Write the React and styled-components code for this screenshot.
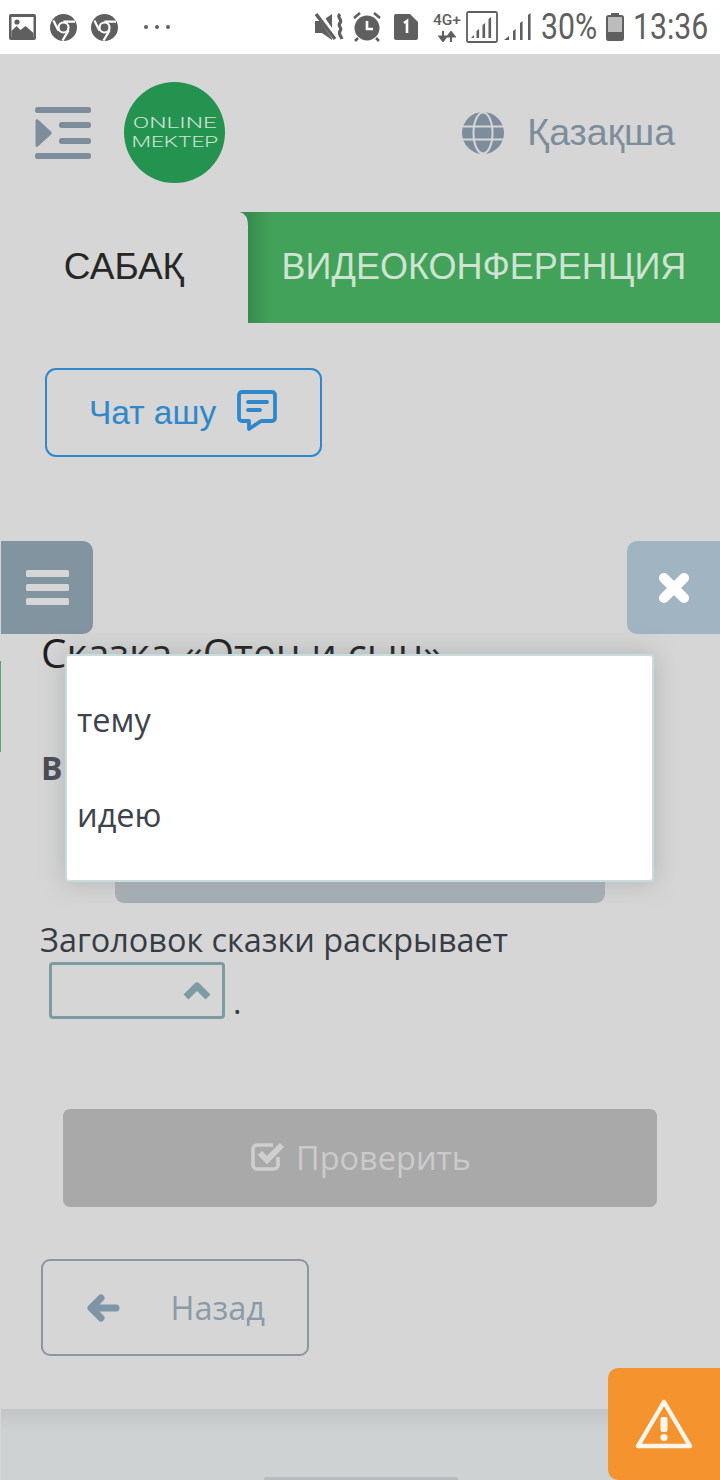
import styled, { createGlobalStyle } from "styled-components";

const GlobalStyle = createGlobalStyle`
  html, body {
    margin: 0;
    padding: 0;
    background: #d6d6d6;
  }
  * {
    box-sizing: border-box;
  }
`;

const STATUS_GREY = "#5f5f5f";

const ImageIcon = () => (
  <svg width="27" height="26" viewBox="0 0 27 26">
    <rect x="0" y="0" width="27" height="26" rx="2" fill={STATUS_GREY} />
    <rect x="2.5" y="3" width="22" height="20" fill="#fff" />
    <circle cx="8" cy="8" r="2.6" fill={STATUS_GREY} />
    <path d="M2.5 23V17l5-5 4 4 5-4 8 7v4z" fill={STATUS_GREY} />
  </svg>
);

const ChromeIcon = () => (
  <svg width="27" height="27" viewBox="0 0 27 27">
    <circle cx="13.5" cy="13.5" r="13.5" fill={STATUS_GREY} />
    <circle cx="13.5" cy="13.5" r="5" fill={STATUS_GREY} stroke="#fff" strokeWidth="2.2" />
    <path d="M13.5 7.6H25M8.4 16.4L3.4 6.5M18.6 16.4L12.5 26.5" stroke="#fff" strokeWidth="2.2" fill="none" />
  </svg>
);

const DotsIcon = () => (
  <svg width="28" height="6" viewBox="0 0 28 6" fill={STATUS_GREY}>
    <circle cx="3" cy="3" r="2" />
    <circle cx="14" cy="3" r="2" />
    <circle cx="25" cy="3" r="2" />
  </svg>
);

const MuteIcon = () => (
  <svg width="30" height="28" viewBox="0 0 30 28">
    <path d="M0 8h7l10-7v26L7 20H0z" fill={STATUS_GREY} />
    <path d="M3 0l18 26" stroke="#fff" strokeWidth="6" />
    <path d="M1 1l19 25" stroke={STATUS_GREY} strokeWidth="3.4" />
    <path d="M25 1c-4 4 3 5 0 9-3 3 3 5 0 8-2 3 1 5 2 8" stroke={STATUS_GREY} strokeWidth="3.2" fill="none" />
  </svg>
);

const AlarmIcon = () => (
  <svg width="28" height="30" viewBox="0 0 28 30">
    <circle cx="14" cy="16" r="12.5" fill={STATUS_GREY} />
    <path d="M14 9v8h6" stroke="#fff" strokeWidth="2.6" fill="none" />
    <path d="M1 6l6-5M27 6l-6-5M5 26l-3 3M23 26l3 3" stroke={STATUS_GREY} strokeWidth="2.6" />
  </svg>
);

const SimIcon = () => (
  <svg width="24" height="26" viewBox="0 0 24 26">
    <path d="M2 0h14l8 8v16a2 2 0 0 1-2 2H2a2 2 0 0 1-2-2V2a2 2 0 0 1 2-2z" fill={STATUS_GREY} />
    <path d="M10 9l3-2v12" stroke="#fff" strokeWidth="2.6" fill="none" />
  </svg>
);

const TransferIcon = () => (
  <svg width="18" height="11" viewBox="0 0 18 11">
    <path d="M5 0v7M1.5 5.5L5 10l3.5-4.5zM13 11V4M9.5 5.5L13 1l3.5 4.5z" stroke={STATUS_GREY} strokeWidth="2" fill={STATUS_GREY} />
  </svg>
);

const SignalBoxIcon = () => (
  <svg width="32" height="32" viewBox="0 0 32 32">
    <rect x="1" y="1" width="30" height="30" rx="1.5" fill="none" stroke={STATUS_GREY} strokeWidth="1.8" />
    <path d="M5 27l3-3v3zM10.5 27v-7l2.6-2v9zM16.5 27V14l2.6-2v15zM22.5 27V8l2.6-2v21z" fill={STATUS_GREY} />
  </svg>
);

const SignalIcon = () => (
  <svg width="28" height="28" viewBox="0 0 28 28">
    <path d="M0 27l5-4v4zM9 27v-9l2.6-2v11zM16 27V10l2.6-2v19zM24 27V2l2.6-2v27z" fill={STATUS_GREY} />
  </svg>
);

const BatteryIcon = () => (
  <svg width="18" height="28" viewBox="0 0 18 28">
    <rect x="5" y="0" width="8" height="3" fill={STATUS_GREY} />
    <rect x="1" y="3" width="16" height="24" rx="1.5" fill="#bcbcbc" stroke={STATUS_GREY} strokeWidth="2" />
    <rect x="1" y="19" width="16" height="8" fill={STATUS_GREY} />
  </svg>
);

const MenuIndentIcon = () => (
  <svg width="56" height="52" viewBox="0 0 56 52">
    <g fill="#7d8d9c">
      <rect x="0" y="0" width="56" height="6" rx="2.5" />
      <rect x="24" y="15" width="32" height="6" rx="2.5" />
      <rect x="24" y="31" width="32" height="6" rx="2.5" />
      <rect x="0" y="46" width="56" height="6" rx="2.5" />
      <path d="M0.5 13.5a1.5 1.5 0 0 1 2.4-1L16 24.6a1.8 1.8 0 0 1 0 2.8L2.9 39.5a1.5 1.5 0 0 1-2.4-1z" />
    </g>
  </svg>
);

const GlobeIcon = () => (
  <svg width="42" height="42" viewBox="0 0 42 42">
    <circle cx="21" cy="21" r="21" fill="#7d8d9c" />
    <ellipse cx="21" cy="21" rx="9.5" ry="20.5" fill="none" stroke="#d6d6d6" strokeWidth="2" />
    <path d="M1 14.5h40M1 27.5h40" stroke="#d6d6d6" strokeWidth="2" />
  </svg>
);

const ChatIcon = () => (
  <svg width="40" height="41" viewBox="0 0 40 41" fill="none" stroke="#2f88cb" strokeWidth="3.8" strokeLinejoin="round" strokeLinecap="round">
    <path d="M5 2h30a3 3 0 0 1 3 3v23a3 3 0 0 1-3 3H24l-12 8v-8H5a3 3 0 0 1-3-3V5a3 3 0 0 1 3-3z" />
    <path d="M11 12h19M11 20h12" />
  </svg>
);

const BurgerIcon = () => (
  <svg width="43" height="35" viewBox="0 0 43 35" fill="#d6d6d6">
    <rect x="0" y="0" width="43" height="7" rx="1.5" />
    <rect x="0" y="14" width="43" height="7" rx="1.5" />
    <rect x="0" y="28" width="43" height="7" rx="1.5" />
  </svg>
);

const CrossIcon = () => (
  <svg width="34" height="34" viewBox="0 0 34 34">
    <path d="M7 7l20 20M27 7L7 27" stroke="#fff" strokeWidth="10" strokeLinecap="round" />
  </svg>
);

const ChevronUpIcon = () => (
  <svg width="30" height="20" viewBox="0 0 30 20">
    <path d="M4 16L15 5l11 11" fill="none" stroke="#7c9ba2" strokeWidth="7" strokeLinejoin="round" />
  </svg>
);

const CheckSquareIcon = () => (
  <svg width="34" height="30" viewBox="0 0 34 30" fill="none">
    <path d="M27 16v8a4 4 0 0 1-4 4H6a4 4 0 0 1-4-4V8a4 4 0 0 1 4-4h16" stroke="#cfcfcf" strokeWidth="3.6" />
    <path d="M9 12l7 7L31 4" stroke="#cfcfcf" strokeWidth="6" />
  </svg>
);

const ArrowLeftIcon = () => (
  <svg width="34" height="28" viewBox="0 0 34 28">
    <path d="M30 14H8M15 4L5 14l10 10" fill="none" stroke="#7d95a6" strokeWidth="7" strokeLinecap="round" strokeLinejoin="round" />
  </svg>
);

const WarningIcon = () => (
  <svg width="58" height="50" viewBox="0 0 58 50">
    <path d="M29 3L3 47h52z" fill="none" stroke="#fdf6ec" strokeWidth="4.4" strokeLinejoin="round" />
    <rect x="25.5" y="18" width="7" height="15" rx="2" fill="#fdf6ec" />
    <circle cx="29" cy="38.5" r="3.6" fill="#fdf6ec" />
  </svg>
);

const Page = styled.div`
  position: relative;
  width: 720px;
  height: 1480px;
  overflow: hidden;
  background: #d6d6d6;
  font-family: "Open Sans", sans-serif;
`;

const StatusBar = styled.div`
  height: 54px;
  background: #fff;
  padding: 0 12px 0 9px;
  display: flex;
  align-items: center;
  justify-content: space-between;
`;

const StatusGroup = styled.div`
  display: flex;
  align-items: center;
`;

const StatusSlot = styled.div`
  display: flex;
  line-height: 0;
  margin-left: ${(p) => p.$ml || 0}px;
`;

const NetLabel = styled.div`
  width: 28px;
  margin-left: 15px;
  display: flex;
  flex-direction: column;
  align-items: center;
  gap: 3px;
  font: 500 15.5px/15px "Roboto", sans-serif;
  color: ${STATUS_GREY};
`;

const StatusText = styled.span`
  font: 400 36px/1 "Roboto", sans-serif;
  color: ${STATUS_GREY};
  display: inline-block;
  width: ${(p) => p.$width}px;
  margin-left: ${(p) => p.$ml}px;
  white-space: nowrap;
  transform: scaleX(0.84);
  transform-origin: left center;
`;

const Header = styled.header`
  height: 158px;
  padding: 28px 45px 0 35px;
  display: flex;
  align-items: flex-start;
`;

const MenuButton = styled.div`
  margin-top: 25px;
  margin-right: 33px;
  line-height: 0;
`;

const Logo = styled.div`
  width: 101px;
  height: 101px;
  border-radius: 50%;
  background: #24934f;
  color: #cfe3d6;
  display: flex;
  flex-direction: column;
  align-items: center;
  justify-content: center;
  font: 300 15.5px/18.4px "Roboto", sans-serif;
`;

const LogoLine = styled.span`
  transform: scaleX(${(p) => p.$stretch});
`;

const LanguagePicker = styled.div`
  margin: 28px 0 0 auto;
  display: flex;
  align-items: center;
  gap: 23px;
  font: 400 37.5px/42px "Liberation Sans", sans-serif;
  color: #7d8d9c;

  svg {
    margin-top: 2px;
  }
`;

const Tabs = styled.div`
  display: flex;
  height: 111px;
`;

const Tab = styled.div`
  width: 248px;
  display: flex;
  align-items: center;
  justify-content: center;
  padding-bottom: 2px;
  font: 400 37px "Liberation Sans", sans-serif;
  color: #262626;
`;

const ActiveTab = styled.div`
  position: relative;
  flex: 1;
  display: flex;
  align-items: center;
  justify-content: center;
  padding-bottom: 2px;
  background: linear-gradient(90deg, #378c50 0, #43a259 24px, #43a259 100%);
  font: 400 36px "Liberation Sans", sans-serif;
  color: #cfe3d2;
  white-space: nowrap;

  &::before {
    content: "";
    position: absolute;
    left: -8px;
    top: 0;
    width: 8px;
    height: 16px;
    clip-path: path("M0 0 H8 V14 Q8 2 0 0 Z");
    background: #378c50;
  }
`;

const Content = styled.main`
  padding: 45px 0 0 45px;
`;

const ChatButton = styled.div`
  width: 277px;
  height: 89px;
  border: 2px solid #2f88cb;
  border-radius: 11px;
  padding-left: 42px;
  display: flex;
  align-items: center;
  gap: 21px;
  font: 400 33.5px "Liberation Sans", sans-serif;
  color: #2f88cb;

  svg {
    margin-top: -4px;
  }
`;

const SideTab = styled.div`
  position: absolute;
  top: 541px;
  height: 93px;
  display: flex;
  align-items: center;
  justify-content: center;
  width: ${(p) => p.$width}px;
  background: ${(p) => p.$bg};
  left: ${(p) => p.$left}px;
  border-radius: ${(p) => p.$radius};
`;

const LessonTitle = styled.h1`
  position: absolute;
  top: 627px;
  left: 41px;
  margin: 0;
  font-size: 40.3px;
  line-height: 52px;
  font-weight: 400;
  color: #1d1d1d;
  white-space: nowrap;
`;

const GreenEdge = styled.div`
  position: absolute;
  left: 0;
  top: 661px;
  width: 1px;
  height: 91px;
  background: #5fa475;
`;

const QuestionLabel = styled.b`
  position: absolute;
  left: 41px;
  top: 747px;
  font-size: 32px;
  line-height: 42px;
  color: #474b55;
`;

const SelectPanelBack = styled.div`
  position: absolute;
  left: 115px;
  top: 870px;
  width: 490px;
  height: 33px;
  border-radius: 0 0 9px 9px;
  background: linear-gradient(180deg, #b5bcc0, #a4adb4);
`;

const Dropdown = styled.div`
  position: absolute;
  left: 65px;
  top: 654px;
  width: 589px;
  height: 228px;
  padding: 16px 10px 0;
  background: #fff;
  border: 2px solid #c9dcdd;
  border-radius: 4px;
  box-shadow: 0 0 26px rgba(120, 125, 128, 0.4);
`;

const Option = styled.div`
  height: 95px;
  display: flex;
  align-items: center;
  font-size: 32.5px;
  color: #3d434c;
`;

const Sentence = styled.div`
  position: absolute;
  left: 40px;
  top: 917px;
  font-size: 32.4px;
  line-height: 44px;
  color: #363c44;
`;

const FillRow = styled.div`
  display: flex;
  align-items: flex-end;
  margin: 1px 0 0 9px;
  gap: 8px;
`;

const SelectBox = styled.div`
  width: 176px;
  height: 57px;
  padding: 0 10px 0 0;
  border: 3px solid #7c9ba2;
  border-radius: 4px;
  display: flex;
  align-items: center;
  justify-content: flex-end;
`;

const Dot = styled.span`
  line-height: 36px;
`;

const CheckButton = styled.div`
  position: absolute;
  left: 63px;
  top: 1109px;
  width: 594px;
  height: 98px;
  border-radius: 7px;
  background: #a9a9a9;
  display: flex;
  align-items: center;
  padding: 0 0 2px 188px;
  gap: 11px;
  font-size: 32.5px;
  color: #cbcbcb;

  svg {
    margin-top: -2px;
  }
`;

const BackButton = styled.div`
  position: absolute;
  left: 41px;
  top: 1259px;
  width: 268px;
  height: 97px;
  border: 2px solid #8d979e;
  border-radius: 9px;
  padding: 0 42px 0 43px;
  display: flex;
  align-items: center;
  justify-content: space-between;
  font-size: 32.5px;
  color: #8a9ba8;
`;

const Footer = styled.footer`
  position: absolute;
  left: 1px;
  right: 0;
  top: 1409px;
  bottom: 0;
  background: linear-gradient(180deg, #c3c6c7 0, #cfd2d3 24px);
`;

const FooterHandle = styled.div`
  position: absolute;
  left: 263px;
  top: 68px;
  width: 194px;
  height: 3px;
  border-radius: 2px 2px 0 0;
  background: #b9bcbe;
`;

const AlertButton = styled.div`
  position: absolute;
  left: 608px;
  top: 1368px;
  width: 112px;
  height: 112px;
  border-radius: 10px 0 0 10px;
  background: #f5942f;
  display: flex;
  align-items: center;
  justify-content: center;
`;

export default function App() {
  return (
    <Page>
      <GlobalStyle />
      <StatusBar>
        <StatusGroup>
          <ImageIcon />
          <StatusSlot $ml={14}>
            <ChromeIcon />
          </StatusSlot>
          <StatusSlot $ml={14}>
            <ChromeIcon />
          </StatusSlot>
          <StatusSlot $ml={25}>
            <DotsIcon />
          </StatusSlot>
        </StatusGroup>
        <StatusGroup>
          <MuteIcon />
          <StatusSlot $ml={8}>
            <AlarmIcon />
          </StatusSlot>
          <StatusSlot $ml={13}>
            <SimIcon />
          </StatusSlot>
          <NetLabel>
            4G+
            <TransferIcon />
          </NetLabel>
          <StatusSlot $ml={5}>
            <SignalBoxIcon />
          </StatusSlot>
          <StatusSlot $ml={6}>
            <SignalIcon />
          </StatusSlot>
          <StatusText $ml={9} $width={55}>30%</StatusText>
          <StatusSlot $ml={10}>
            <BatteryIcon />
          </StatusSlot>
          <StatusText $ml={9} $width={75}>13:36</StatusText>
        </StatusGroup>
      </StatusBar>

      <Header>
        <MenuButton>
          <MenuIndentIcon />
        </MenuButton>
        <Logo>
          <LogoLine $stretch={1.57}>ONLINE</LogoLine>
          <LogoLine $stretch={1.45}>MEKTEP</LogoLine>
        </Logo>
        <LanguagePicker>
          <GlobeIcon />
          Қазақша
        </LanguagePicker>
      </Header>

      <Tabs>
        <Tab>САБАҚ</Tab>
        <ActiveTab>ВИДЕОКОНФЕРЕНЦИЯ</ActiveTab>
      </Tabs>

      <Content>
        <ChatButton>
          Чат ашу
          <ChatIcon />
        </ChatButton>
      </Content>

      <LessonTitle>Сказка «Отец и сын»</LessonTitle>
      <GreenEdge />
      <QuestionLabel>В</QuestionLabel>
      <SideTab $left={1} $width={92} $bg="#82949f" $radius="0 10px 10px 0">
        <BurgerIcon />
      </SideTab>
      <SideTab $left={627} $width={93} $bg="#a0b4c1" $radius="10px 0 0 10px">
        <CrossIcon />
      </SideTab>

      <SelectPanelBack />
      <Dropdown>
        <Option>тему</Option>
        <Option>идею</Option>
      </Dropdown>

      <Sentence>
        Заголовок сказки раскрывает
        <FillRow>
          <SelectBox>
            <ChevronUpIcon />
          </SelectBox>
          <Dot>.</Dot>
        </FillRow>
      </Sentence>

      <CheckButton>
        <CheckSquareIcon />
        Проверить
      </CheckButton>

      <BackButton>
        <ArrowLeftIcon />
        Назад
      </BackButton>

      <Footer>
        <FooterHandle />
      </Footer>
      <AlertButton>
        <WarningIcon />
      </AlertButton>
    </Page>
  );
}
